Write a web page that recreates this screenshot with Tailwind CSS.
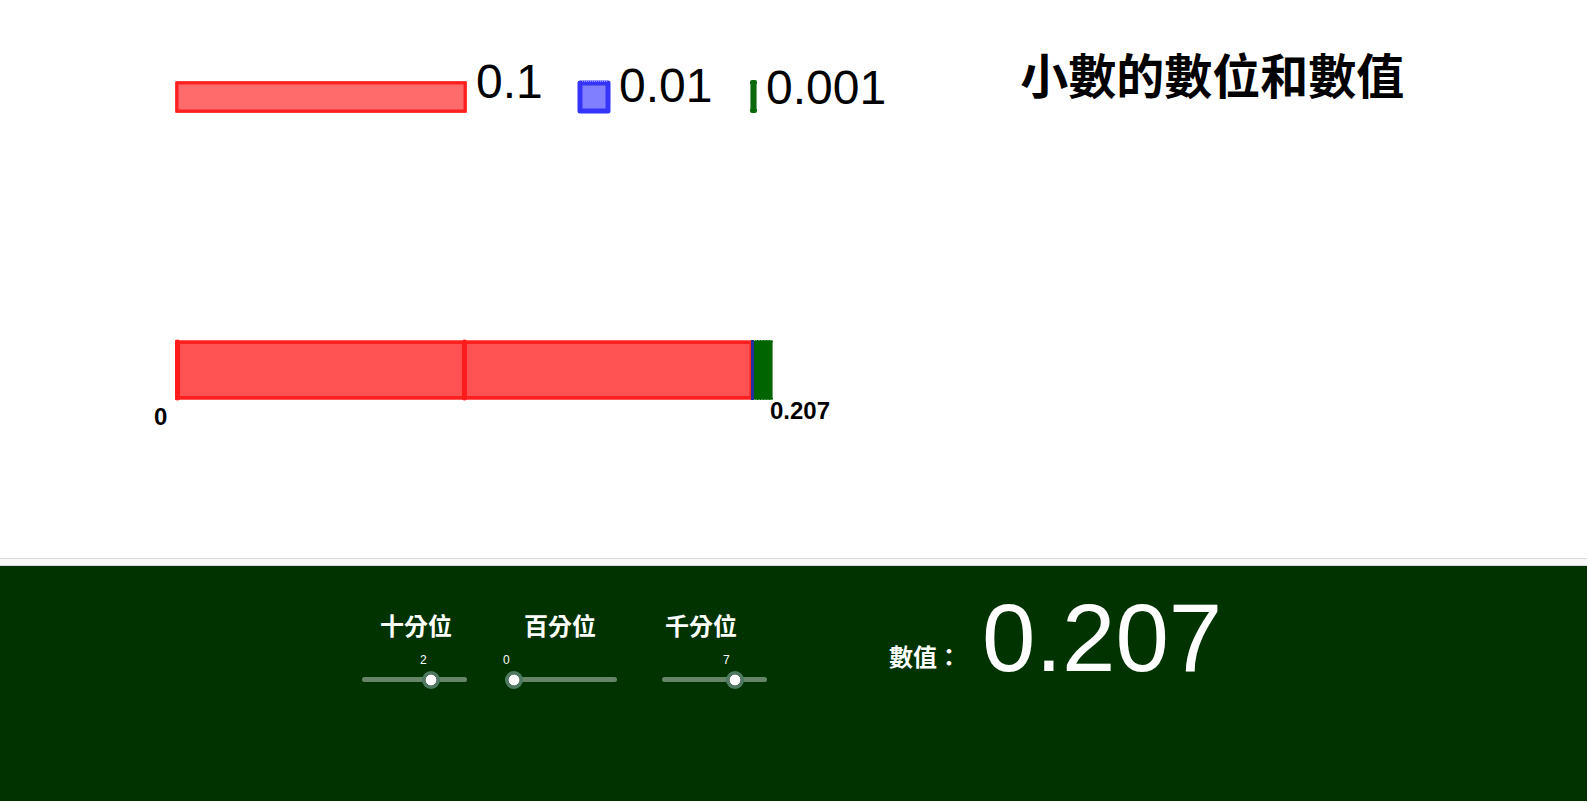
<!DOCTYPE html>
<html lang="zh-Hant">
<head>
<meta charset="utf-8">
<meta name="viewport" content="width=device-width, initial-scale=1">
<title>小數的數位和數值</title>
<script src="https://cdn.jsdelivr.net/npm/@tailwindcss/browser@4"></script>
</head>
<body class="flex min-h-screen flex-col bg-white pr-0.5 pb-0.5 font-['Liberation_Sans','Noto_Sans_CJK_TC',sans-serif] text-black">

<main class="grow border-b border-[#dcdcdc]">
  <div class="flex items-start pt-[58px] pl-[174px]">
    <!-- Unit pieces: one tenth, one hundredth, one thousandth -->
    <div class="flex w-[403px] items-start gap-2">
      <svg class="mt-[22px] shrink-0" width="294" height="34" viewBox="0 0 294 34" aria-hidden="true">
        <rect x="1" y="1" width="292" height="32" rx="1.5" fill="#ff5555"/>
        <rect x="3" y="3" width="288" height="28" fill="#ff6b6b" stroke="#ff2020" stroke-width="3"/>
      </svg>
      <p class="text-[48px] leading-[48px]">0.1</p>
    </div>
    <div class="flex w-[173px] items-start gap-2">
      <svg class="mt-[22px] shrink-0" width="34" height="34" viewBox="0 0 34 34" aria-hidden="true">
        <rect x="3" y="3" width="28" height="28" fill="#7f7fff" stroke="#3434fa" stroke-width="5" stroke-linejoin="round"/>
        <path d="M5 1.5h25" stroke="#9c9cff" stroke-dasharray="1 1"/>
      </svg>
      <p class="mt-1 text-[48px] leading-[48px]">0.01</p>
    </div>
    <div class="flex items-start gap-2">
      <svg class="mt-[22px] shrink-0" width="8" height="34" viewBox="0 0 8 34" aria-hidden="true">
        <rect x="0" y="0" width="7" height="33" rx="2" fill="#0b690b"/>
        <path d="M0.5 4v25M6.5 4v25" stroke="#76a876"/>
      </svg>
      <p class="mt-1.5 text-[48px] leading-[48px]">0.001</p>
    </div>
    <h1 class="-mt-1 ml-[134px] text-[48px] leading-[48px] font-bold whitespace-nowrap">小數的數位和數值</h1>
  </div>

  <!-- Composed number, drawn from 0 to its value -->
  <figure class="mt-[225px] flex items-end pl-[154px]">
    <span class="mb-0.5 w-5 text-2xl leading-6 font-bold">0</span>
    <svg class="mb-7 shrink-0" width="600" height="64" viewBox="0 0 600 64" role="img" aria-label="0.207">
      <rect x="1" y="1" width="576" height="60" fill="#ff5a5a"/>
      <rect x="3" y="3.5" width="574" height="55" fill="#ff5252" stroke="#ff2020" stroke-width="3"/>
      <path d="M3.5 3v56M290.5 3v56" stroke="#ff1c1c" stroke-width="5" stroke-linecap="round"/>
      <path d="M578.5 1v60" stroke="#25309a" stroke-width="3"/>
      <rect x="580" y="1" width="19" height="60" rx="1.5" fill="#006400"/>
      <path d="M598.5 3v56" stroke="#71a371"/>
      <path d="M581 1.5h17M581 60.5h17" stroke="#4c914c" stroke-dasharray="2 1"/>
    </svg>
    <figcaption class="-ml-1 mb-2 text-2xl leading-6 font-bold">0.207</figcaption>
  </figure>
</main>

<div class="h-[7px] border-b border-[#d9dcd9] bg-[#f8f8fa]"></div>

<section class="flex min-h-[235px] items-start bg-[#003300] pt-8 pl-[362px] text-white">
  <div class="mt-[17px] w-[150px]">
    <label for="tenths" class="ml-[18px] block text-2xl leading-6 font-bold">十分位</label>
    <output for="tenths" class="mt-[13px] ml-[58px] block text-xs leading-4">2</output>
    <div class="relative mt-0.5 h-[18px] w-[105px]">
      <span class="absolute inset-x-0 top-[7px] h-[5px] rounded-full bg-[#668566]"></span>
      <input id="tenths" type="range" min="0" max="3" value="2" class="absolute top-0 -left-[7px] m-0 h-[19px] w-[119px] appearance-none bg-transparent [&::-webkit-slider-thumb]:size-[18px] [&::-webkit-slider-thumb]:appearance-none [&::-webkit-slider-thumb]:rounded-full [&::-webkit-slider-thumb]:bg-[radial-gradient(circle,#ffffff_5px,#16331f_6px,#4d7a60_6px,#4d7a60_9px)]">
    </div>
  </div>
  <div class="mt-[17px] w-[150px]">
    <label for="hundredths" class="ml-3 block text-2xl leading-6 font-bold">百分位</label>
    <output for="hundredths" class="mt-[13px] -ml-[9px] block text-xs leading-4">0</output>
    <div class="relative mt-0.5 h-[18px] w-[105px]">
      <span class="absolute inset-x-0 top-[7px] h-[5px] rounded-full bg-[#668566]"></span>
      <input id="hundredths" type="range" min="0" max="9" value="0" class="absolute top-0 -left-[7px] m-0 h-[19px] w-[119px] appearance-none bg-transparent [&::-webkit-slider-thumb]:size-[18px] [&::-webkit-slider-thumb]:appearance-none [&::-webkit-slider-thumb]:rounded-full [&::-webkit-slider-thumb]:bg-[radial-gradient(circle,#ffffff_5px,#16331f_6px,#4d7a60_6px,#4d7a60_9px)]">
    </div>
  </div>
  <div class="mt-[17px] w-[227px]">
    <label for="thousandths" class="ml-[3px] block text-2xl leading-6 font-bold">千分位</label>
    <output for="thousandths" class="mt-[13px] ml-[61px] block text-xs leading-4">7</output>
    <div class="relative mt-0.5 h-[18px] w-[105px]">
      <span class="absolute inset-x-0 top-[7px] h-[5px] rounded-full bg-[#668566]"></span>
      <input id="thousandths" type="range" min="0" max="10" value="7" class="absolute top-0 -left-[7px] m-0 h-[19px] w-[119px] appearance-none bg-transparent [&::-webkit-slider-thumb]:size-[18px] [&::-webkit-slider-thumb]:appearance-none [&::-webkit-slider-thumb]:rounded-full [&::-webkit-slider-thumb]:bg-[radial-gradient(circle,#ffffff_5px,#16331f_6px,#4d7a60_6px,#4d7a60_9px)]">
    </div>
  </div>
  <label for="value" class="mt-12 w-[93px] text-2xl leading-6 font-bold">數值：</label>
  <output id="value" for="tenths hundredths thousandths" class="text-[96px] leading-[80px]">0.207</output>
</section>

</body>
</html>
